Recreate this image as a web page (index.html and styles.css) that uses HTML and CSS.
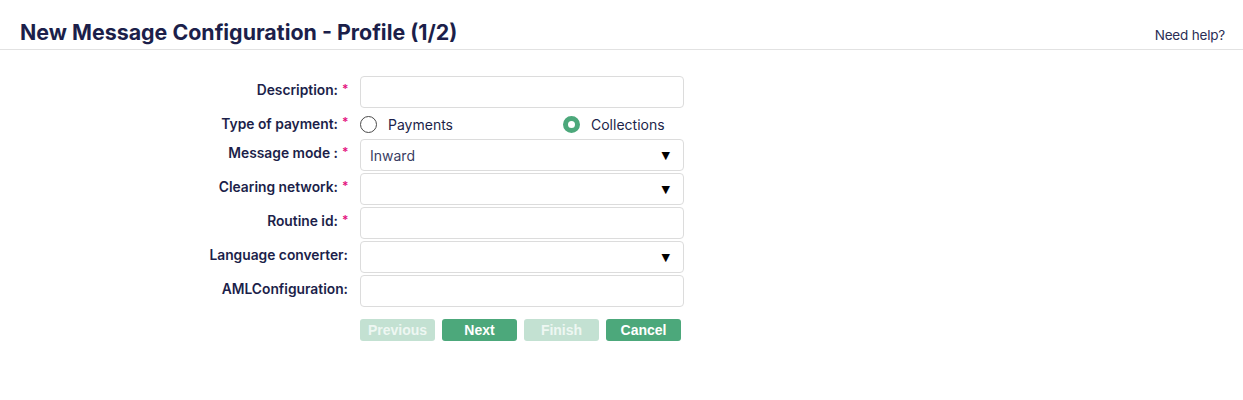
FILE: index.html
```html
<!DOCTYPE html>
<html>
<head>
<meta charset="utf-8">
<link rel="stylesheet" href="styles.css">
</head>
<body>
<header class="header">
  <h1 class="title">New Message Configuration - Profile (1/2)</h1>
  <a class="help">Need help?</a>
</header>
<form class="form">
  <label class="label">Description:<span class="req">*</span></label>
  <div class="input"></div>

  <label class="label label-radio">Type of payment:<span class="req">*</span></label>
  <div class="radios">
    <span class="radio-opt"><span class="radio"></span><span class="radio-text">Payments</span></span>
    <span class="radio-opt"><span class="radio checked"></span><span class="radio-text">Collections</span></span>
  </div>

  <label class="label">Message mode :<span class="req">*</span></label>
  <div class="input select"><span class="value">Inward</span><span class="arrow">▼</span></div>

  <label class="label">Clearing network:<span class="req">*</span></label>
  <div class="input select"><span class="value"></span><span class="arrow">▼</span></div>

  <label class="label">Routine id:<span class="req">*</span></label>
  <div class="input"></div>

  <label class="label">Language converter:</label>
  <div class="input select"><span class="value"></span><span class="arrow">▼</span></div>

  <label class="label">AMLConfiguration:</label>
  <div class="input"></div>

  <div></div>
  <div class="buttons">
    <button type="button" class="btn disabled">Previous</button>
    <button type="button" class="btn">Next</button>
    <button type="button" class="btn disabled">Finish</button>
    <button type="button" class="btn">Cancel</button>
  </div>
</form>
</body>
</html>
```
FILE: styles.css
```css
html, body {
  margin: 0;
  padding: 0;
  background: #fff;
  font-family: Inter, "Noto Sans", sans-serif;
  color: #1c1f4a;
}
.header {
  display: flex;
  align-items: flex-end;
  justify-content: space-between;
  height: 49px;
  padding: 0 18px 0 20px;
  border-bottom: 1px solid #e2e2e2;
}
.title {
  margin: 0 0 4px 0;
  font-size: 21.4px;
  font-weight: 700;
  color: #1c1f4a;
}
.help {
  font-size: 13.5px;
  color: #2a2d55;
  margin-bottom: 6px;
  letter-spacing: -0.2px;
}
.form {
  display: grid;
  grid-template-columns: 348px 324px;
  grid-template-rows: 32px 27px 32px 32px 32px 32px 32px auto;
  column-gap: 12px;
  row-gap: 2px;
  margin-top: 26px;
}
.label {
  display: flex;
  align-items: center;
  justify-content: flex-end;
  font-size: 13.8px;
  font-weight: 600;
  color: #1c1f4a;
  white-space: nowrap;
  padding-bottom: 4px;
}
.label-radio {
  padding-bottom: 0;
}
.req {
  color: #e4127f;
  font-size: 12px;
  margin-left: 4px;
  width: 6px;
  margin-top: -4px;
}
.input {
  box-sizing: border-box;
  height: 32px;
  border: 1px solid #dcdcdc;
  border-radius: 4px;
  background: #fff;
}
.select {
  display: flex;
  align-items: center;
  justify-content: space-between;
  padding: 0 13px 0 9px;
}
.value {
  font-size: 14px;
  color: #3a3d63;
}
.arrow {
  font-size: 11px;
  color: #000;
  font-family: "DejaVu Sans", sans-serif;
}
.radios {
  display: grid;
  grid-template-columns: 203px 1fr;
  align-items: center;
  padding-top: 2px;
}
.radio-opt {
  display: flex;
  align-items: center;
}
.radio {
  box-sizing: border-box;
  width: 17px;
  height: 17px;
  border: 1px solid #4a4a4a;
  border-radius: 50%;
  background: #fff;
}
.radio.checked {
  border: 5.5px solid #4ca87b;
  background: #fff;
}
.radio-text {
  margin-left: 11px;
  font-size: 14px;
  color: #1c1f4a;
}
.buttons {
  display: flex;
  gap: 7px;
  margin-top: 10px;
}
.btn {
  width: 75px;
  height: 22px;
  padding: 0;
  border: none;
  border-radius: 3px;
  background: #4ca87b;
  color: #fff;
  font-family: "Liberation Sans", Arial, sans-serif;
  font-weight: 700;
  font-size: 14px;
}
.btn.disabled {
  background: #c3e1d2;
  color: #eef7f2;
}
```
